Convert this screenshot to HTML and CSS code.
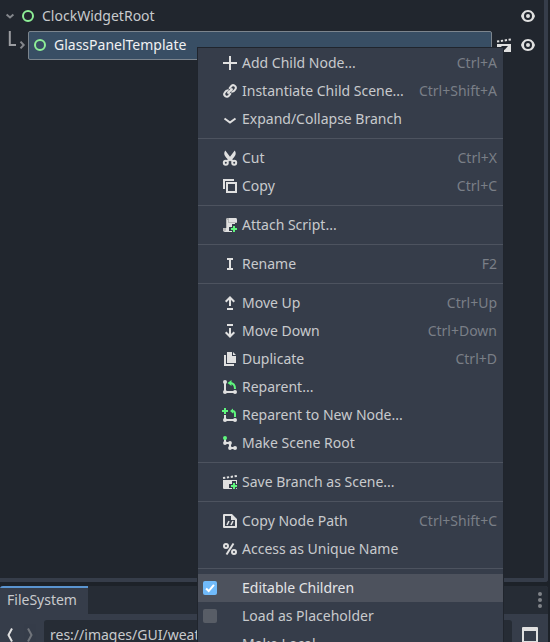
FILE: index.html
```html
<!DOCTYPE html>
<html lang="en">
<head>
<meta charset="utf-8">
<title>Scene</title>
<link rel="stylesheet" href="styles.css">
</head>
<body>
<div class="editor">
  <section class="scene-dock">
    <div class="tree-row root-row">
      <svg class="icon fold" viewBox="0 0 16 16"><path class="dim-line" d="M4.600 6.500 8 9.500l3.400-3"/></svg>
      <svg class="icon" viewBox="0 0 16 16"><circle class="ring" cx="8" cy="8" r="5"/></svg>
      <span class="node-name">ClockWidgetRoot</span>
      <svg class="icon eye" viewBox="0 0 16 16"><path class="fill" fill-rule="evenodd" d="M8 2C4.200 2 1.800 5 1 8c.8 3 3.200 6 7 6s6.200-3 7-6c-.8-3-3.200-6-7-6zm0 2a4 4 0 0 1 0 8 4 4 0 0 1 0-8zm0 2a2 2 0 0 0 0 4 2 2 0 0 0 0-4z"/></svg>
    </div>
    <div class="tree-row child-row">
      <svg class="branch" viewBox="0 0 28 29"><path class="branch-line" d="M9.800 0v14H16"/><path class="dim-line" d="m20.500 10.600 3.200 3.400-3.200 3.400"/></svg>
      <div class="selection">
        <svg class="icon" viewBox="0 0 16 16"><circle class="ring" cx="8" cy="8" r="5"/></svg>
        <span class="node-name">GlassPanelTemplate</span>
      </div>
      <svg class="icon clap" viewBox="0 0 16 16"><path class="fill" d="M1 7h14v8H1z"/><path class="mark" d="M5 9h7l-3.500 4z"/><path class="slats" d="m1 4.500 14-2"/></svg>
      <svg class="icon eye" viewBox="0 0 16 16"><path class="fill" fill-rule="evenodd" d="M8 2C4.200 2 1.800 5 1 8c.8 3 3.200 6 7 6s6.200-3 7-6c-.8-3-3.200-6-7-6zm0 2a4 4 0 0 1 0 8 4 4 0 0 1 0-8zm0 2a2 2 0 0 0 0 4 2 2 0 0 0 0-4z"/></svg>
    </div>
  </section>
  <section class="file-dock">
    <div class="tabs">
      <div class="tab">FileSystem</div>
      <svg class="icon dots" viewBox="0 0 16 16"><circle cx="8" cy="2" r="2"/><circle cx="8" cy="8" r="2"/><circle cx="8" cy="14" r="2"/></svg>
    </div>
    <div class="path-bar">
      <svg class="icon" viewBox="0 0 16 16"><path class="line" d="M10 1.500 6.500 8l3.500 6.500"/></svg>
      <svg class="icon forward" viewBox="0 0 16 16"><path class="dim-line" d="m6 1.500 3.500 6.500L6 14.500"/></svg>
      <div class="path-input">res://images/GUI/weather</div>
      <svg class="icon split" viewBox="0 0 16 16"><path class="fill" fill-rule="evenodd" d="M1 0h14q1 0 1 1v15H0V1q0-1 1-1zm1 4v10h12V4z"/></svg>
    </div>
  </section>
</div>

<div class="menu">
  <div class="item"><svg class="icon" viewBox="0 0 16 16"><path class="fill" d="M7 1v6H1v2h6v6h2V9h6V7H9V1z"/></svg><span>Add Child Node...</span><kbd>Ctrl+A</kbd></div>
  <div class="item"><svg class="icon" viewBox="0 0 16 16"><path class="line" d="M7.200 5.800 9 3.300a2.600 2.600 0 0 1 4.200 3.200c-.8 1.400-2.200 2.500-3.800 2.200M8.800 10.200 7 12.700a2.600 2.600 0 0 1-4.200-3.200C3.600 8.100 5 7 6.600 7.300M5.500 10.500l5-5"/></svg><span>Instantiate Child Scene...</span><kbd>Ctrl+Shift+A</kbd></div>
  <div class="item"><svg class="icon" viewBox="0 0 16 16"><path class="line" d="m2.500 7.500 5.500 4 5.500-4"/></svg><span>Expand/Collapse Branch</span></div>
  <hr>
  <div class="item"><svg class="icon" viewBox="0 0 16 16"><path class="fill" d="M3.300.500C1.500 3 2 5.500 5.500 9L8 11.500l2.500-2.500C14 5.500 14.500 3 12.700.500L8 6.800z"/><path class="line" d="M5 11.500 8 8.500l3 3"/><circle class="line" cx="3.800" cy="12.700" r="2"/><circle class="line" cx="12.200" cy="12.700" r="2"/></svg><span>Cut</span><kbd>Ctrl+X</kbd></div>
  <div class="item"><svg class="icon" viewBox="0 0 16 16"><path class="line" d="M2 11V2h10"/><path class="line" d="M5 5h9v9H5z"/></svg><span>Copy</span><kbd>Ctrl+C</kbd></div>
  <hr>
  <div class="item"><svg class="icon" viewBox="0 0 16 16"><path class="fill" d="M6 1h8q1 0 1 2v2h-2v7q0 3-3 3H3q-2 0-2-2v-2h3V3q0-2 2-2z"/><path class="shade" d="M4 3q0-2 2-2h1v4h8v1H6V3H5v8H4zM1 11h3v2q0 1-1 1t-2-1z"/><path class="plus-edge" d="M12 9v6M9 12h6"/><path class="plus" d="M12 9v6M9 12h6"/></svg><span>Attach Script...</span></div>
  <hr>
  <div class="item"><svg class="icon" viewBox="0 0 16 16"><path class="fill" d="M5 2h6v2H9v8h2v2H5v-2h2V4H5z"/></svg><span>Rename</span><kbd>F2</kbd></div>
  <hr>
  <div class="item"><svg class="icon" viewBox="0 0 16 16"><path class="line" d="M8 11V3M3.700 6.800 8 2.500l4.300 4.300M5 14h6"/></svg><span>Move Up</span><kbd>Ctrl+Up</kbd></div>
  <div class="item"><svg class="icon" viewBox="0 0 16 16"><path class="line" d="M8 5v8M3.700 9.200 8 13.500l4.300-4.300M5 2h6"/></svg><span>Move Down</span><kbd>Ctrl+Down</kbd></div>
  <div class="item"><svg class="icon" viewBox="0 0 16 16"><path class="fill" d="M5 1h5v4h4v7H5zM11 1l3 3h-3z"/><path class="line" d="M3 4v10h9"/></svg><span>Duplicate</span><kbd>Ctrl+D</kbd></div>
  <div class="item"><svg class="icon" viewBox="0 0 16 16"><path class="line" d="M3 3v10h10"/><circle class="fill" cx="3" cy="3" r="2"/><circle class="fill" cx="3" cy="13" r="2"/><circle class="fill" cx="13" cy="13" r="2"/><path class="green-line" d="M8 4c3 0 5 2 5 6"/><path class="green" d="M9.500 1v6L5.500 4z"/></svg><span>Reparent...</span></div>
  <div class="item"><svg class="icon" viewBox="0 0 16 16"><path class="line" d="M3 8v5h10"/><circle class="fill" cx="3" cy="13" r="2"/><circle class="fill" cx="13" cy="13" r="2"/><path class="green" d="M2 1h2v2h2v2H4v2H2V5H0V3h2zM11 1.500v5L8 4z"/><path class="green-line" d="M10.500 4q2.500 0 2.500 3v3"/></svg><span>Reparent to New Node...</span></div>
  <div class="item"><svg class="icon" viewBox="0 0 16 16"><path class="line" d="M3 4v4h5v5h5"/><circle class="green" cx="3" cy="3" r="2"/><circle class="fill" cx="3" cy="8" r="1.900"/><circle class="fill" cx="8" cy="8" r="1.900"/><circle class="fill" cx="8" cy="13" r="1.900"/><circle class="fill" cx="13" cy="13" r="2"/></svg><span>Make Scene Root</span></div>
  <hr>
  <div class="item"><svg class="icon" viewBox="0 0 16 16"><path class="fill" d="M1 6h14v8q0 1-1 1H2q-1 0-1-1z"/><path class="slats" d="m1 4 14-2"/><path class="plus-edge" d="M12 9v6M9 12h6"/><path class="plus" d="M12 9v6M9 12h6"/></svg><span>Save Branch as Scene...</span></div>
  <hr>
  <div class="item"><svg class="icon" viewBox="0 0 16 16"><path class="fill" fill-rule="evenodd" d="M2 1h8l5 5v8q0 1-1 1H2q-1 0-1-1V2q0-1 1-1zm1 2v10h10V7H9V3z"/><path class="slash" d="m5 12 2-4M9 12l2-4"/></svg><span>Copy Node Path</span><kbd>Ctrl+Shift+C</kbd></div>
  <div class="item"><svg class="icon" viewBox="0 0 16 16"><circle class="line" cx="4" cy="5" r="2"/><circle class="line" cx="12" cy="11" r="2"/><path class="line" d="M11.500 2.500l-7 11"/></svg><span>Access as Unique Name</span></div>
  <hr>
  <div class="item check-item hovered"><span class="check checked"><svg class="icon" viewBox="0 0 16 16"><path d="m3.500 8.500 3 3 6-7"/></svg></span><span>Editable Children</span></div>
  <div class="item check-item"><span class="check"></span><span>Load as Placeholder</span></div>
  <div class="item plain-item"><span>Make Local</span></div>
</div>
</body>
</html>
```
FILE: styles.css
```css
* { box-sizing: border-box; }
html, body { height: 100%; }
body {
  margin: 0;
  overflow: hidden;
  background: #1d2229;
  color: #c8cacd;
  font: 14px/20px "Noto Sans", sans-serif;
  white-space: nowrap;
}
.editor { display: flex; flex-direction: column; gap: 4px; height: 642px; overflow: hidden; padding-right: 2px; }
.icon { width: 16px; height: 16px; flex: none; display: block; }

.fill { fill: #e0e0e0; }
.line { fill: none; stroke: #e0e0e0; stroke-width: 2; }
.dim-line { fill: none; stroke: #84878c; stroke-width: 2; }
.ring { fill: none; stroke: #8eef97; stroke-width: 2; }
.slats { fill: none; stroke: #e0e0e0; stroke-width: 2; stroke-dasharray: 2.3 1.6; }
.mark { fill: #21262e; }
.shade { fill: #b8b8b8; }
.green { fill: #5ff77d; }
.green-line { fill: none; stroke: #5ff77d; stroke-width: 2; }
.plus { stroke: #5ff77d; stroke-width: 2; }
.plus-edge { stroke: #363d4a; stroke-width: 4; stroke-linecap: square; }
.slash { stroke: #e0e0e0; stroke-width: 1.6; }

.scene-dock { height: 582px; flex: none; background: #21262e; border: solid #363d4a; border-width: 0 4px 4px 0; border-radius: 0 0 3px 0; }
.tree-row { display: flex; align-items: center; height: 28px; padding-right: 8px; }
.root-row { height: 31px; padding: 1px 8px 0 2px; }
.fold { margin-right: 2px; }
.root-row .node-name { margin-left: 6px; }
.eye { margin-left: auto; }
.branch { width: 28px; height: 29px; flex: none; }
.branch-line { fill: none; stroke: #9b9da1; stroke-width: 2; }
.selection { display: flex; align-items: center; gap: 6px; width: 464px; height: 29px; margin-bottom: -1px; padding: 0 0 1px 3px; background: #384e64; border: 1px solid #7c858e; border-radius: 2px; color: #f0f1f2; }
.clap { margin-left: 4px; }

.file-dock { flex: 1; background: #363d4a; border-radius: 3px 3px 0 0; overflow: hidden; }
.tabs { display: flex; justify-content: space-between; height: 28px; background: #262c35; }
.tab { width: 88px; padding: 2px 0 0 7px; border-top: 2px solid #5b95d1; background: #363d4a; }
.dots { margin: 6px 0 0; fill: #808388; }
.path-bar { display: flex; align-items: flex-start; padding: 6px 10px 0 2px; }
.path-bar > .icon { margin-top: 7px; }
.path-bar .forward { margin-left: 4px; opacity: .75; }
.path-input { width: 468px; height: 34px; margin-left: 6px; padding: 5px 6px; background: #262c35; border-radius: 3px; }
.path-bar .split { margin-left: auto; }

.menu { position: absolute; left: 197px; top: 47px; width: 307px; height: 620px; padding-top: 1px; background: #363d4a; border: 1px solid #20252d; }
.item { display: flex; align-items: center; gap: 4px; height: 28px; padding: 0 6px 0 24px; }
.item kbd { margin-left: auto; color: #7a7f87; font: inherit; }
.menu hr { height: 11px; margin: 0; border: solid #363d4a; border-width: 5px 0; background: #4d535f; }
.check-item { padding-left: 5px; gap: 25px; }
.plain-item { padding-left: 44px; }
.hovered { background: #4d525d; color: #e4e5e7; }
.check { width: 14px; height: 14px; border-radius: 2px; background: #585d66; }
.checked { background: #70bafa; }
.check .icon { width: 14px; height: 14px; fill: none; stroke: #fff; stroke-width: 2.300; }
```
